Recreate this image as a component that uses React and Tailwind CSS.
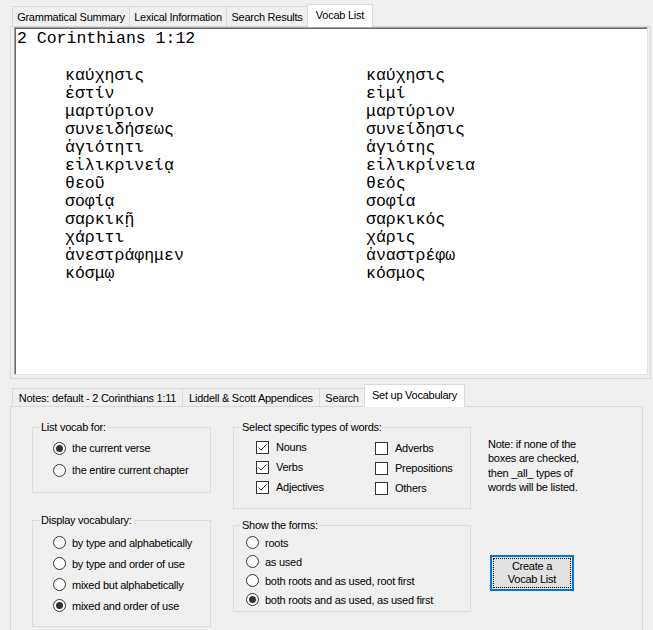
import React from 'react';

const topTabs = [
  { label: 'Grammatical Summary', w: 118 },
  { label: 'Lexical Information', w: 98 },
  { label: 'Search Results', w: 82 },
  { label: 'Vocab List', w: 66, active: true },
];

const bottomTabs = [
  { label: 'Notes: default - 2 Corinthians 1:11', w: 171 },
  { label: 'Liddell & Scott Appendices', w: 138 },
  { label: 'Search', w: 46 },
  { label: 'Set up Vocabulary', w: 101, active: true },
];

const words = [
  ['καύχησις', 'καύχησις'],
  ['ἐστίν', 'εἰμί'],
  ['μαρτύριον', 'μαρτύριον'],
  ['συνειδήσεως', 'συνείδησις'],
  ['ἁγιότητι', 'ἁγιότης'],
  ['εἰλικρινείᾳ', 'εἰλικρίνεια'],
  ['θεοῦ', 'θεός'],
  ['σοφίᾳ', 'σοφία'],
  ['σαρκικῇ', 'σαρκικός'],
  ['χάριτι', 'χάρις'],
  ['ἀνεστράφημεν', 'ἀναστρέφω'],
  ['κόσμῳ', 'κόσμος'],
];

function TabStrip({ tabs, tall }) {
  return (
    <div className="flex items-end h-[22px] pl-[2px]">
      {tabs.map((t) =>
        t.active ? (
          <div
            key={t.label}
            style={{ width: t.w }}
            className="relative z-10 -mb-px -ml-px h-[23px] bg-white border border-b-0 border-[#d9d9d9] flex items-center justify-center pb-[2px]"
          >
            {t.label}
          </div>
        ) : (
          <div
            key={t.label}
            style={{ width: t.w }}
            className={`${tall ? 'h-[20px]' : 'h-[18px]'} -ml-px first:ml-0 bg-[#f0f0f0] border border-b-0 border-[#d9d9d9] flex items-center justify-center`}
          >
            {t.label}
          </div>
        )
      )}
    </div>
  );
}

function Radio({ checked }) {
  return (
    <span className="w-[13px] h-[13px] shrink-0 rounded-full border border-[#333333] bg-white flex items-center justify-center">
      {checked && <span className="w-[7px] h-[7px] rounded-full bg-[#333333]" />}
    </span>
  );
}

function Check({ checked }) {
  return (
    <span className="w-[13px] h-[13px] shrink-0 border border-[#333333] bg-white flex items-center justify-center">
      {checked && (
        <svg width="11" height="11" viewBox="0 0 11 11">
          <path d="M1.5 5.5 L4 8 L9.5 2.5" fill="none" stroke="#333333" strokeWidth="1" />
        </svg>
      )}
    </span>
  );
}

// group box: border with the caption sitting on its top edge
function Group({ title, className, pad, children }) {
  return (
    <div className={`border border-[#dcdcdc] ${className}`}>
      <div className="-mt-[8px] ml-[7px] px-[1px] w-fit bg-[#f0f0f0] leading-[14px]">{title}</div>
      <div className={pad}>{children}</div>
    </div>
  );
}

function RadioRow({ label, checked, h }) {
  return (
    <div className={`flex items-center gap-[6px] ${h}`}>
      <Radio checked={checked} />
      <span>{label}</span>
    </div>
  );
}

function CheckRow({ label, checked }) {
  return (
    <div className="flex items-center gap-[7px] h-[20px]">
      <Check checked={checked} />
      <span>{label}</span>
    </div>
  );
}

export default function App() {
  return (
    <div
      className="w-[653px] h-[630px] overflow-hidden bg-[#f0f0f0] text-black text-[11px] leading-[14px] tracking-[-0.25px]"
      style={{ fontFamily: '"Liberation Sans", Arial, sans-serif' }}
    >
      {/* upper tab control */}
      <div className="pl-[10px] pr-[2px] pt-[4px]">
        <TabStrip tabs={topTabs} tall />
        <div className="border border-[#d9d9d9] bg-[#f0f0f0] pl-[3px] pr-[2px] pb-[3px] h-[353px]">
          <div className="h-full border-t border-l border-[#a0a0a0] border-r border-b border-r-[#e3e3e3] border-b-[#e3e3e3]">
            <div
              className="h-full border-t border-l border-[#696969] border-r-0 border-b-0 bg-white pl-[1px] pt-[1px] text-[16.5px] leading-[18px] tracking-normal"
              style={{ fontFamily: '"Liberation Mono", "DejaVu Sans Mono", monospace' }}
            >
              <div className="whitespace-pre">2 Corinthians 1:12</div>
              <div className="h-[19px]" />
              {words.map(([a, b], i) => (
                <div key={i} className="flex whitespace-pre">
                  <span className="pl-[48px] w-[349px]">{a}</span>
                  <span>{b}</span>
                </div>
              ))}
            </div>
          </div>
        </div>
      </div>

      {/* lower tab control */}
      <div className="pl-[10px] pr-[10px] mt-[5px]">
        <TabStrip tabs={bottomTabs} />
        <div className="border border-[#d9d9d9] bg-[#f0f0f0] h-[240px] pl-[21px] pt-[20px] flex">
          <div className="flex flex-col w-[179px]">
            <Group title="List vocab for:" pad="pl-[20px] pt-[3px] pb-[11px]">
              <RadioRow label="the current verse" checked h="h-[22px]" />
              <RadioRow label="the entire current chapter" h="h-[22px]" />
            </Group>
            <Group title="Display vocabulary:" className="mt-[27px]" pad="pl-[20px] pt-[5px] pb-[10px]">
              <RadioRow label="by type and alphabetically" h="h-[21px]" />
              <RadioRow label="by type and order of use" h="h-[21px]" />
              <RadioRow label="mixed but alphabetically" h="h-[21px]" />
              <RadioRow label="mixed and order of use" checked h="h-[21px]" />
            </Group>
          </div>

          <div className="flex flex-col w-[238px] ml-[22px]">
            <Group title="Select specific types of words:" pad="pl-[22px] pt-[3px] pb-[10px]">
              <div className="flex">
                <div className="w-[119px]">
                  <CheckRow label="Nouns" checked />
                  <CheckRow label="Verbs" checked />
                  <CheckRow label="Adjectives" checked />
                </div>
                <div className="pt-[1px]">
                  <CheckRow label="Adverbs" />
                  <CheckRow label="Prepositions" />
                  <CheckRow label="Others" />
                </div>
              </div>
            </Group>
            <Group title="Show the forms:" className="mt-[16px]" pad="pl-[12px] pt-[1px] pb-[2px]">
              <RadioRow label="roots" h="h-[19px]" />
              <RadioRow label="as used" h="h-[19px]" />
              <RadioRow label="both roots and as used, root first" h="h-[19px]" />
              <RadioRow label="both roots and as used, as used first" checked h="h-[19px]" />
            </Group>
          </div>

          <div className="flex flex-col ml-[17px] pt-[10px]">
            <p className="leading-[14.3px]">
              Note: if none of the
              <br />
              boxes are checked,
              <br />
              then _all_ types of
              <br />
              words will be listed.
            </p>
            <button
              type="button"
              className="mt-[61px] ml-[2px] w-[84px] h-[36px] border-2 border-[#0078d7] bg-[#e1e1e1] p-[1px]"
            >
              <span className="h-full w-full border border-dotted border-black flex items-center justify-center text-center leading-[13px]">
                Create a
                <br />
                Vocab List
              </span>
            </button>
          </div>
        </div>
      </div>
    </div>
  );
}
